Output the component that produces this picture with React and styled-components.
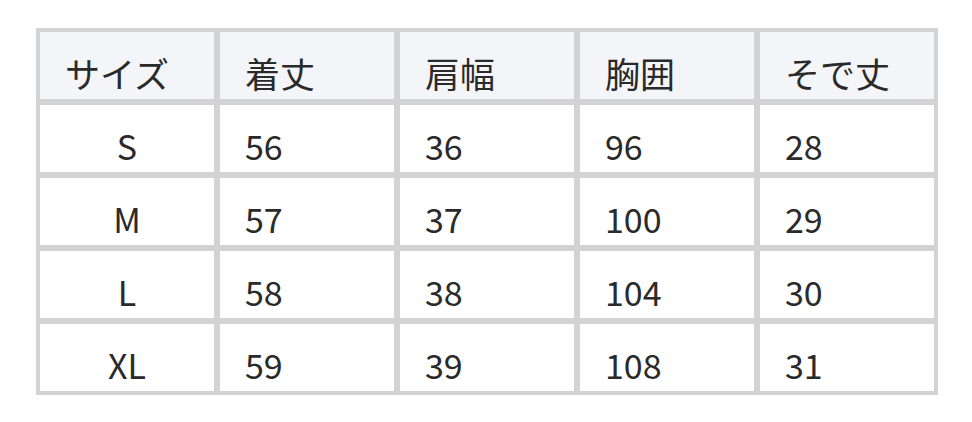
import React from 'react';
import styled, { createGlobalStyle } from 'styled-components';

const GlobalStyle = createGlobalStyle`
  body {
    margin: 0;
    background: #fff;
    font-family: "Noto Sans CJK JP", "Noto Sans", sans-serif;
    color: #2a2a2a;
  }
`;

const Page = styled.div`
  padding: 28px 0 0 36px;
`;

const Table = styled.table`
  border-collapse: separate;
  border-spacing: 0;
  border: 1px solid #d3d3d3;
  table-layout: fixed;
  width: 902px;
`;

const Cell = styled.td`
  border: 3px solid #d3d3d3;
  height: 49px;
  box-sizing: content-box;
  padding: 16px 25px 2px;
  font-size: ${p => (p.$head ? '35px' : '34px')};
  line-height: 49px;
  font-weight: 400;
  text-align: ${p => (p.$center ? 'center' : 'left')};
  background: ${p => (p.$head ? '#f4f5f9' : '#fff')};
  vertical-align: bottom;
  white-space: nowrap;
`;

const headers = ['サイズ', '着丈', '肩幅', '胸囲', 'そで丈'];

const rows = [
  ['S', 56, 36, 96, 28],
  ['M', 57, 37, 100, 29],
  ['L', 58, 38, 104, 30],
  ['XL', 59, 39, 108, 31],
];

export default function App() {
  return (
    <Page>
      <GlobalStyle />
      <Table>
        <thead>
          <tr>
            {headers.map(h => (
              <Cell as="th" $head key={h}>{h}</Cell>
            ))}
          </tr>
        </thead>
        <tbody>
          {rows.map(r => (
            <tr key={r[0]}>
              {r.map((v, i) => (
                <Cell key={i} $center={i === 0}>{v}</Cell>
              ))}
            </tr>
          ))}
        </tbody>
      </Table>
    </Page>
  );
}
